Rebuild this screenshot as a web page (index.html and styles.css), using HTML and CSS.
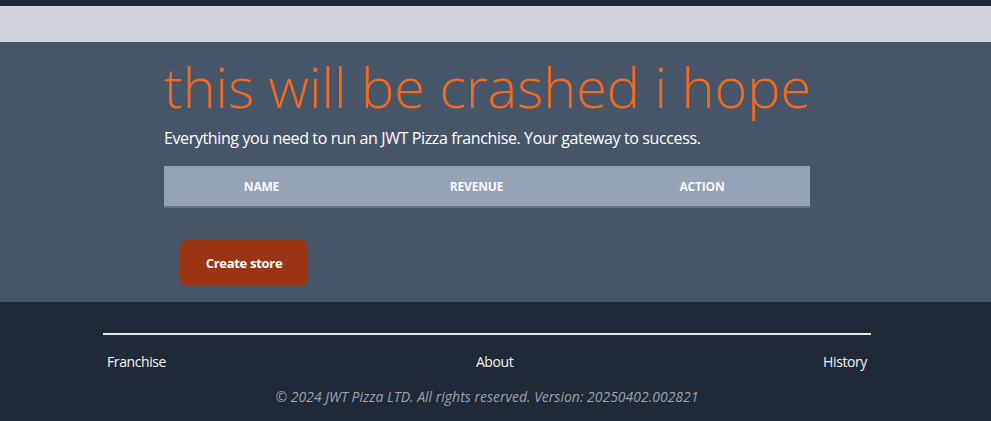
FILE: index.html
```html
<!DOCTYPE html>
<html lang="en">
<head>
<meta charset="utf-8">
<title>JWT Pizza</title>
<link rel="stylesheet" href="styles.css">
</head>
<body>
<div class="topbar"></div>
<div class="header"></div>
<main class="main">
  <div class="container">
    <h2 class="title">this will be crashed i hope</h2>
    <p class="subtitle">Everything you need to run an JWT Pizza franchise. Your gateway to success.</p>
    <table class="stores">
      <thead>
        <tr>
          <th class="col-name">Name</th>
          <th class="col-revenue">Revenue</th>
          <th class="col-action">Action</th>
        </tr>
      </thead>
    </table>
    <button class="create-btn" type="button">Create store</button>
  </div>
</main>
<footer class="footer">
  <div class="footer-inner">
    <nav class="footer-links">
      <a href="#">Franchise</a>
      <a href="#">About</a>
      <a href="#">History</a>
    </nav>
    <p class="copyright">© 2024 JWT Pizza LTD. All rights reserved. Version: 20250402.002821</p>
  </div>
</footer>
</body>
</html>
```
FILE: styles.css
```css
* { box-sizing: border-box; }
html, body { margin: 0; padding: 0; }
body {
  font-family: "Open Sans", "Noto Sans", sans-serif;
  background: #1f2937;
  color: #f3f4f6;
}
.topbar { height: 6px; background: #1f2937; }
.header { height: 36px; background: #d1d5db; }
.main {
  background: #475569;
  height: 260px;
  padding-right: 17px;
}
.container {
  width: 646px;
  margin: 0 auto;
  padding-top: 14px;
}
.title {
  margin: 0;
  font-size: 56px;
  line-height: 60px;
  font-weight: 300;
  color: #f06b22;
  white-space: nowrap;
  letter-spacing: -0.1px;
}
.subtitle {
  margin: 10px 0 0;
  font-size: 16px;
  line-height: 24px;
  letter-spacing: -0.38px;
  color: #ffffff;
  white-space: nowrap;
}
.stores {
  margin-top: 16px;
  width: 646px;
  border-collapse: collapse;
  table-layout: fixed;
}
.stores th {
  height: 41px;
  padding: 0;
  background: #94a3b8;
  border-bottom: 2px solid #6b7280;
  color: #f8fafc;
  font-size: 12px;
  font-weight: 700;
  letter-spacing: -0.2px;
  text-transform: uppercase;
  text-align: center;
}
.col-name { width: 195px; }
.col-revenue { width: 235px; }
.col-action { width: 216px; }
.create-btn {
  display: block;
  margin: 32px 0 0 16px;
  width: 128px;
  height: 46px;
  border: none;
  border-radius: 7px;
  background: #9a3412;
  color: #ffffff;
  font-family: inherit;
  font-size: 13px;
  font-weight: 700;
  letter-spacing: -0.3px;
}
.footer {
  height: 119px;
  padding-right: 17px;
  padding-top: 31px;
}
.footer-inner {
  width: 768px;
  margin: 0 auto;
  border-top: 2px solid #e5e7eb;
}
.footer-links {
  display: flex;
  justify-content: space-between;
  padding: 15px 4px 0;
}
.footer-links a {
  color: #f3f4f6;
  text-decoration: none;
  font-size: 14px;
  line-height: 24px;
  letter-spacing: -0.4px;
}
.copyright {
  margin: 13px 0 0;
  text-align: center;
  font-style: italic;
  font-size: 14px;
  line-height: 20px;
  color: #9ca3af;
}
```
